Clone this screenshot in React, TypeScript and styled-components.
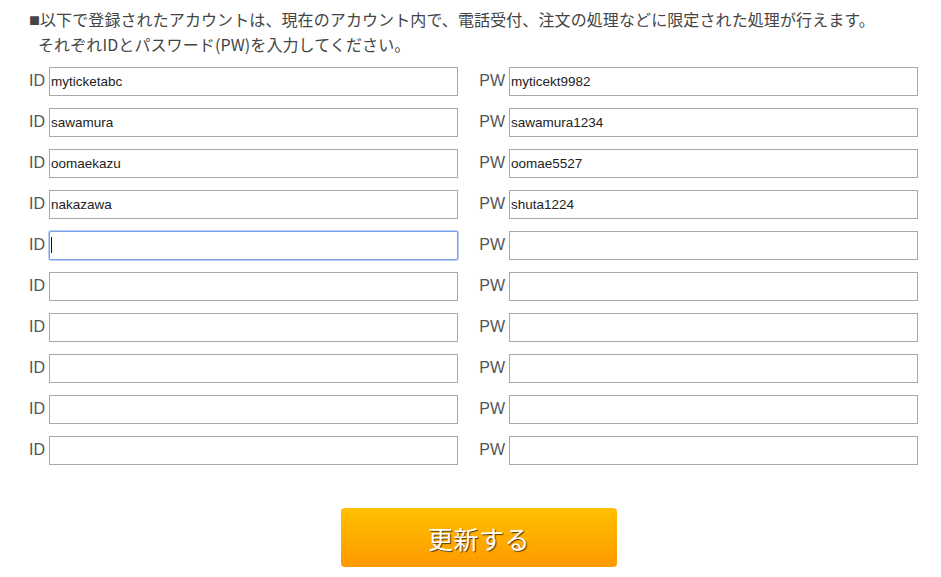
import React from 'react'
import styled, { createGlobalStyle } from 'styled-components'

const accounts = [
  { id: 'myticketabc', pw: 'myticekt9982' },
  { id: 'sawamura', pw: 'sawamura1234' },
  { id: 'oomaekazu', pw: 'oomae5527' },
  { id: 'nakazawa', pw: 'shuta1224' },
  { id: '', pw: '' },
  { id: '', pw: '' },
  { id: '', pw: '' },
  { id: '', pw: '' },
  { id: '', pw: '' },
  { id: '', pw: '' },
]

const GlobalStyle = createGlobalStyle`
  html, body {
    margin: 0;
    padding: 0;
    background: #fff;
  }
  body {
    font-family: "Liberation Sans", "Noto Sans CJK JP", sans-serif;
    color: #444;
  }
`

const Page = styled.div`
  width: 941px;
  padding: 7px 23px 0 29px;
  box-sizing: border-box;
`

const Notice = styled.p`
  margin: 0 0 11px 0;
  font-family: "Noto Sans CJK JP", sans-serif;
  font-size: 16px;
  line-height: 24px;
  color: #444;
  letter-spacing: 0.1px;
`

const Bullet = styled.span`
  font-size: 11px;
  letter-spacing: 0;
  vertical-align: 1px;
`

const SubLine = styled.span`
  display: block;
  padding-left: 9px;
`

const Grid = styled.div`
  display: grid;
  grid-template-columns: auto auto;
  justify-content: space-between;
  row-gap: 12px;
`

const Field = styled.label`
  display: flex;
  align-items: center;
  gap: 4px;
`

const Label = styled.span`
  font-size: 16px;
  line-height: 20px;
  color: #555;
  margin-top: -1px;
`

const InputWrap = styled.div`
  position: relative;
`

const Input = styled.input<{ $focused?: boolean }>`
  width: 409px;
  height: 29px;
  box-sizing: border-box;
  border: 1px solid ${(p) => (p.$focused ? '#7a9fe3' : '#a9a9a9')};
  border-radius: ${(p) => (p.$focused ? '2px' : '0')};
  box-shadow: ${(p) => (p.$focused ? '0 0 0 1px #b8cff7' : 'none')};
  padding: 0 1px;
  font-family: "Liberation Sans", Arial, sans-serif;
  font-size: 13.5px;
  color: #222;
  outline: none;
  background: #fff;
`

const Caret = styled.span`
  position: absolute;
  left: 2px;
  top: 6px;
  width: 1px;
  height: 16px;
  background: #111;
`

const Actions = styled.div`
  display: flex;
  justify-content: center;
  margin-top: 43px;
  padding-left: 11px;
`

const SubmitButton = styled.button`
  width: 276px;
  height: 59px;
  border: none;
  border-radius: 4px;
  background: linear-gradient(to bottom, #ffc000 0%, #ffad00 50%, #ff9900 100%);
  color: #fff;
  font-family: "Noto Sans CJK JP", sans-serif;
  font-size: 25px;
  letter-spacing: 0.5px;
  text-shadow: 1px 1px 1px #5a3a00;
  cursor: pointer;
`

const App: React.FC = () => {
  return (
    <>
      <GlobalStyle />
      <Page>
        <Notice>
          <Bullet>■</Bullet>以下で登録されたアカウントは、現在のアカウント内で、電話受付、注文の処理などに限定された処理が行えます。
          <SubLine>それぞれIDとパスワード(PW)を入力してください。</SubLine>
        </Notice>
        <Grid>
          {accounts.map((a, i) => (
            <React.Fragment key={i}>
              <Field>
                <Label>ID</Label>
                <InputWrap>
                  <Input type="text" defaultValue={a.id} $focused={i === 4} />
                  {i === 4 && <Caret />}
                </InputWrap>
              </Field>
              <Field>
                <Label>PW</Label>
                <InputWrap>
                  <Input type="text" defaultValue={a.pw} />
                </InputWrap>
              </Field>
            </React.Fragment>
          ))}
        </Grid>
        <Actions>
          <SubmitButton type="button">更新する</SubmitButton>
        </Actions>
      </Page>
    </>
  )
}

export default App
